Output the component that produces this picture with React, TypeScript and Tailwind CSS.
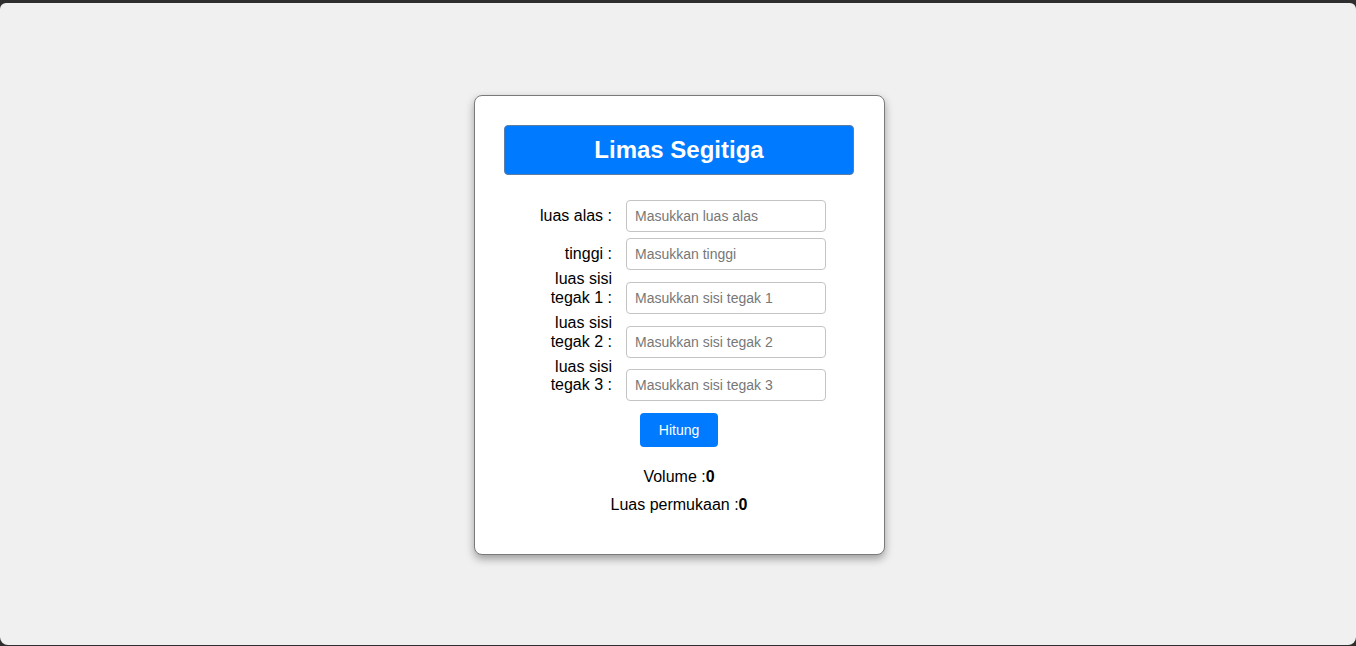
import * as React from "react";

const rows = [
  { label: "luas alas :", placeholder: "Masukkan luas alas", gap: "mb-[6px]" },
  { label: "tinggi :", placeholder: "Masukkan tinggi", gap: "" },
  { label: "luas sisi tegak 1 :", placeholder: "Masukkan sisi tegak 1", gap: "" },
  { label: "luas sisi tegak 2 :", placeholder: "Masukkan sisi tegak 2", gap: "" },
  { label: "luas sisi tegak 3 :", placeholder: "Masukkan sisi tegak 3", gap: "" }
];

export default function App() {
  const [volume] = React.useState(0);
  const [luas] = React.useState(0);

  return (
    <div className="h-[646px] bg-[#2e2e2e] pt-[3px] pb-px font-['Liberation_Sans',Arial,sans-serif] text-black">
      <div className="flex h-full justify-center rounded-b-lg rounded-t-md bg-[#f0f0f0] pl-[3px] pt-[92px]">
        <div className="h-[460px] w-[411px] rounded-lg border border-[#7a7a7a] bg-white pl-[29px] pr-[30px] pt-[29px] shadow-[0_4px_8px_rgba(0,0,0,0.35)]">
          <h1 className="flex h-[50px] items-center justify-center rounded border border-[#5f7ea3] bg-[#007bff] text-[24px] font-bold text-white">
            Limas Segitiga
          </h1>

          <div className="mt-[25px] flex flex-col pl-[14px]">
            {rows.map((r) => (
              <div key={r.label} className={`flex gap-[14px] [align-items:last_baseline] ${r.gap}`}>
                <label className="w-[94px] text-right text-[16px] leading-[18.8px]">{r.label}</label>
                <input
                  type="text"
                  placeholder={r.placeholder}
                  className="h-[32px] w-[200px] rounded border border-[#c4c4c4] px-[8px] text-[14px] outline-none placeholder:text-[#777]"
                />
              </div>
            ))}
          </div>

          <div className="mt-[12px] flex justify-center">
            <button className="h-[34px] w-[78px] rounded bg-[#007bff] text-[14px] text-white">Hitung</button>
          </div>

          <p className="mt-[21px] text-center text-[16px] leading-[18px]">
            Volume :<b>{volume}</b>
          </p>
          <p className="mt-[10px] text-center text-[16px] leading-[18px]">
            Luas permukaan :<b>{luas}</b>
          </p>
        </div>
      </div>
    </div>
  );
}
